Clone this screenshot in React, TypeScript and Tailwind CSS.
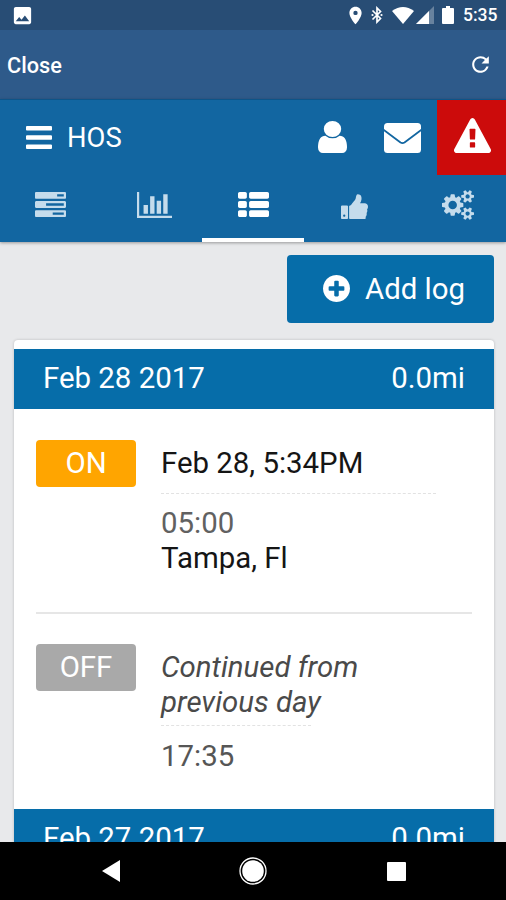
import type { ReactNode } from "react";
import { MdLocationOn, MdPhoto, MdRefresh } from "react-icons/md";
import clsx from "clsx";

const ICONS = {
  bars: "M1664 1344v128q0 26-19 45t-45 19h-1408q-26 0-45-19t-19-45v-128q0-26 19-45t45-19h1408q26 0 45 19t19 45zm0-512v128q0 26-19 45t-45 19h-1408q-26 0-45-19t-19-45v-128q0-26 19-45t45-19h1408q26 0 45 19t19 45zm0-512v128q0 26-19 45t-45 19h-1408q-26 0-45-19t-19-45v-128q0-26 19-45t45-19h1408q26 0 45 19t19 45z",
  user: "M1536 1399q0 109-62.5 187t-150.5 78h-854q-88 0-150.5-78t-62.5-187q0-85 8.5-160.5t31.5-152 58.5-131 94-89 134.5-34.5q131 128 313 128t313-128q76 0 134.5 34.5t94 89 58.5 131 31.5 152 8.5 160.5zm-256-887q0 159-112.5 271.5t-271.5 112.5-271.5-112.5-112.5-271.5 112.5-271.5 271.5-112.5 271.5 112.5 112.5 271.5z",
  warning:
    "M1024 1375v-190q0-14-9.5-23.5t-22.5-9.5h-192q-13 0-22.5 9.5t-9.5 23.5v190q0 14 9.5 23.5t22.5 9.5h192q13 0 22.5-9.5t9.5-23.5zm-2-374l18-459q0-12-10-19-13-11-24-11h-220q-11 0-24 11-10 7-10 21l17 457q0 10 10 16.5t24 6.5h185q14 0 23.5-6.5t10.5-16.5zm-14-934l768 1408q35 63-2 126-17 29-46.5 46t-63.5 17h-1536q-34 0-63.5-17t-46.5-46q-37-63-2-126l768-1408q17-31 47-49t65-18 65 18 47 49z",
  tasks:
    "M1024 1408h640v-128h-640v128zm-384-512h1024v-128h-1024v128zm640-512h384v-128h-384v128zm512 832v256q0 26-19 45t-45 19h-1664q-26 0-45-19t-19-45v-256q0-26 19-45t45-19h1664q26 0 45 19t19 45zm0-512v256q0 26-19 45t-45 19h-1664q-26 0-45-19t-19-45v-256q0-26 19-45t45-19h1664q26 0 45 19t19 45zm0-512v256q0 26-19 45t-45 19h-1664q-26 0-45-19t-19-45v-256q0-26 19-45t45-19h1664q26 0 45 19t19 45z",
  chart:
    "M640 896v512h-256v-512h256zm384-512v1024h-256v-1024h256zm1024 1152v128h-2048v-1536h128v1408h1920zm-640-896v768h-256v-768h256zm384-384v1152h-256v-1152h256z",
  list: "M512 1248v192q0 40-28 68t-68 28h-320q-40 0-68-28t-28-68v-192q0-40 28-68t68-28h320q40 0 68 28t28 68zm0-512v192q0 40-28 68t-68 28h-320q-40 0-68-28t-28-68v-192q0-40 28-68t68-28h320q40 0 68 28t28 68zm1280 512v192q0 40-28 68t-68 28h-960q-40 0-68-28t-28-68v-192q0-40 28-68t68-28h960q40 0 68 28t28 68zm-1280-1024v192q0 40-28 68t-68 28h-320q-40 0-68-28t-28-68v-192q0-40 28-68t68-28h320q40 0 68 28t28 68zm1280 512v192q0 40-28 68t-68 28h-960q-40 0-68-28t-28-68v-192q0-40 28-68t68-28h960q40 0 68 28t28 68zm0-512v192q0 40-28 68t-68 28h-960q-40 0-68-28t-28-68v-192q0-40 28-68t68-28h960q40 0 68 28t28 68z",
  thumb:
    "M320 1344q0-26-19-45t-45-19q-27 0-45.5 19t-18.5 45q0 27 18.5 45.5t45.5 18.5q26 0 45-18.5t19-45.5zm160-512v640q0 26-19 45t-45 19h-288q-26 0-45-19t-19-45v-640q0-26 19-45t45-19h288q26 0 45 19t19 45zm1184 0q0 86-55 149 15 44 15 76 3 76-43 137 17 56 0 117-15 57-54 94 9 112-49 181-64 76-197 78h-129q-66 0-144-15.5t-121.5-29-120.5-39.5q-123-43-158-44-26-1-45-19.5t-19-44.5v-641q0-25 18-43.5t43-20.5q24-2 76-59t101-121q68-87 101-120 18-18 31-48t17.5-48.5 13.5-60.5q7-39 12.5-61t19.5-52 34-50q19-19 45-19 46 0 82.5 10.5t60 26 40 40.500 24 45 12 50 5 45 .5 39q0 38-9.500 76t-19 60-27.500 56q-3 6-10 18t-11 22-8 24h277q78 0 135 57t57 135z",
  cogs: "M896 896q0-106-75-181t-181-75-181 75-75 181 75 181 181 75 181-75 75-181zm768 512q0-52-38-90t-90-38-90 38-38 90q0 53 37.5 90.5t90.5 37.5 90.5-37.5 37.5-90.5zm0-1024q0-52-38-90t-90-38-90 38-38 90q0 53 37.5 90.5t90.5 37.5 90.5-37.5 37.5-90.5zm-384 421v185q0 10-7 19.5t-16 10.5l-155 24q-11 35-32 76 34 48 90 115 7 11 7 20 0 12-7 19-23 30-82.5 89.5t-78.5 59.5q-11 0-21-7l-115-90q-37 19-77 31-11 108-23 155-7 24-30 24h-186q-11 0-20-7.5t-10-17.5l-23-153q-34-10-75-31l-118 89q-7 7-20 7-11 0-21-8-144-133-144-160 0-9 7-19 10-14 41-53t47-61q-23-44-35-82l-152-24q-10-1-17-9.5t-7-19.5v-185q0-10 7-19.5t16-10.5l155-24q11-35 32-76-34-48-90-115-7-11-7-20 0-12 7-20 22-30 82-89t79-59q11 0 21 7l115 90q34-18 77-32 11-108 23-154 7-24 30-24h186q11 0 20 7.5t10 17.5l23 153q34 10 75 31l118-89q8-7 20-7 11 0 21 8 144 133 144 160 0 8-7 19-12 16-42 54t-45 60q23 48 34 82l152 23q10 2 17 10.5t7 19.5zm640 533v140q0 16-149 31-12 27-30 52 51 113 51 138 0 4-4 7-122 71-124 71-8 0-46-47t-52-68q-20 2-30 2t-30-2q-14 21-52 68t-46 47q-2 0-124-71-4-3-4-7 0-25 51-138-18-25-30-52-149-15-149-31v-140q0-16 149-31 13-29 30-52-51-113-51-138 0-4 4-7 4-2 35-20t59-34 30-16q8 0 46 46.5t52 67.5q20-2 30-2t30 2q51-71 92-112l6-2q4 0 124 70 4 3 4 7 0 25-51 138 17 23 30 52 149 15 149 31zm0-1024v140q0 16-149 31-12 27-30 52 51 113 51 138 0 4-4 7-122 71-124 71-8 0-46-47t-52-68q-20 2-30 2t-30-2q-14 21-52 68t-46 47q-2 0-124-71-4-3-4-7 0-25 51-138-18-25-30-52-149-15-149-31v-140q0-16 149-31 13-29 30-52-51-113-51-138 0-4 4-7 4-2 35-20t59-34 30-16q8 0 46 46.5t52 67.5q20-2 30-2t30 2q51-71 92-112l6-2q4 0 124 70 4 3 4 7 0 25-51 138 17 23 30 52 149 15 149 31z",
  plus: "M1344 960v-128q0-26-19-45t-45-19h-256v-256q0-26-19-45t-45-19h-128q-26 0-45 19t-19 45v256h-256q-26 0-45 19t-19 45v128q0 26 19 45t45 19h256v256q0 26 19 45t45 19h128q26 0 45-19t19-45v-256h256q26 0 45-19t19-45zm320-64q0 209-103 385.5t-279.5 279.5-385.5 103-385.5-103-279.5-279.5-103-385.5 103-385.5 279.5-279.5 385.5-103 385.5 103 279.5 279.5 103 385.5z",
};

type IconName = keyof typeof ICONS;

function Icon({ name, box, className }: { name: IconName; box: string; className: string }) {
  return (
    <svg viewBox={box} preserveAspectRatio="none" className={clsx("fill-current flex-shrink-0", className)}>
      <path d={ICONS[name]} />
    </svg>
  );
}

const TABS: { name: IconName; box: string; size: string }[] = [
  { name: "tasks", box: "0 128 1792 1408", size: "w-[31px] h-[25px]" },
  { name: "chart", box: "0 128 2048 1536", size: "w-[35px] h-[26px] ml-[5px] mt-[1px]" },
  { name: "list", box: "0 128 1792 1408", size: "w-[31px] h-[25px] ml-[1px]" },
  { name: "thumb", box: "64 0 1600 1536", size: "w-[27px] h-[27px] ml-[1px] mt-[1px]" },
  { name: "cogs", box: "0 0 1920 1792", size: "w-[32px] h-[30px] ml-[6px] mt-[1px]" },
];

function StatusBar() {
  return (
    <div className="h-[30px] flex-shrink-0 bg-[#284d75] flex items-center text-white">
      <MdPhoto className="w-[23px] h-[23px] ml-[11px]" />
      <div className="flex-1" />
      <MdLocationOn className="w-[21px] h-[21px]" />
      <svg viewBox="0 0 12 18" className="w-[12px] h-[18px] ml-[5px]">
        <path d="M1.500 4.500 9.500 12.500 6 16V2l3.500 3.500-8 8" fill="none" stroke="#fff" strokeWidth="1.700" />
        <circle cx="1.500" cy="9" r="1.100" fill="#fff" />
        <circle cx="10.500" cy="9" r="1.100" fill="#fff" />
      </svg>
      <svg viewBox="0 0 22 17" className="w-[22px] h-[17px] ml-[9px] fill-current">
        <path d="M11 17 0 4Q11-4 22 4z" />
      </svg>
      <svg viewBox="0 0 18 18" className="w-[18px] h-[18px] ml-[2px] fill-current">
        <path d="M0 18 18 0v18z" opacity=".3" />
        <path d="M0 18 13 5v13z" />
      </svg>
      <svg viewBox="0 0 12 18" className="w-[12px] h-[18px] ml-[8px] fill-current">
        <path d="M1 2h3V0h4v2h3q1 0 1 1v14q0 1-1 1H1q-1 0-1-1V3q0-1 1-1z" />
      </svg>
      <span className="w-[35px] ml-[9px] mr-[8px] pt-[2px] text-[17.5px] leading-none font-medium">5:35</span>
    </div>
  );
}

function AppHeader() {
  return (
    <header className="relative z-10 h-[143px] flex-shrink-0 bg-[#1266a1] text-white flex flex-col shadow-[0_1px_3px_rgba(0,0,0,0.35)]">
      <div className="h-[76px] flex items-center border-t border-[#0d5488]">
        <Icon name="bars" box="128 256 1536 1280" className="w-[26px] h-[23px] ml-[26px] mb-[1px]" />
        <span className="flex-1 ml-[15px] pt-[2px] text-[27.4px] leading-none">HOS</span>
        <Icon name="user" box="256 128 1280 1536" className="w-[29px] h-[32px] mb-[1px]" />
        <svg viewBox="0 0 37 30" className="w-[37px] h-[30px] ml-[37px] mr-[16px] mt-[1px]">
          <rect width="37" height="30" rx="3.5" className="fill-white" />
          <path d="M-1 6.500 16.500 19.500Q18.500 20.800 20.500 19.500L38 6.500" fill="none" stroke="#1266a1" strokeWidth="1.800" />
        </svg>
        <div className="w-[69px] h-full bg-[#cc0b0b] flex items-center justify-center">
          <Icon name="warning" box="0 0 1792 1664" className="w-[37px] h-[35px] mb-[4px] ml-[1px]" />
        </div>
      </div>
      <nav className="flex-1 flex">
        {TABS.map((tab) => {
          const active = tab.name === "list";
          return (
            <div
              key={tab.name}
              className={clsx(
                "flex-1 flex items-center justify-center border-b-4 pb-[4px]",
                active ? "border-white" : "border-transparent text-[#c5dcec]"
              )}
            >
              <Icon name={tab.name} box={tab.box} className={tab.size} />
            </div>
          );
        })}
      </nav>
    </header>
  );
}

function DayHeader({ date, miles }: { date: string; miles: string }) {
  return (
    <div className="h-[60px] px-[29px] pb-[1px] bg-[#066da9] text-white flex items-center justify-between">
      <span>{date}</span>
      <span>{miles}</span>
    </div>
  );
}

function LogEntry({ status, children }: { status: "ON" | "OFF"; children: ReactNode }) {
  return (
    <div className="flex items-start gap-[25px]">
      <span
        className={clsx(
          "w-[100px] h-[47px] rounded-[4px] text-white flex items-center justify-center flex-shrink-0",
          status === "ON" ? "bg-[#ffa500]" : "bg-[#a9a9a9]"
        )}
      >
        {status}
      </span>
      <div className="pt-[6px]">{children}</div>
    </div>
  );
}

function NavBar() {
  return (
    <div className="h-[58px] flex-shrink-0 bg-black flex items-center pl-[102px]">
      <svg viewBox="0 0 18 22" className="w-[18px] h-[22px] fill-white">
        <path d="M18 0v22L0 11z" />
      </svg>
      <svg viewBox="0 0 28 28" className="w-[28px] h-[28px] ml-[119px]">
        <circle cx="14" cy="14" r="13" fill="none" stroke="#fff" strokeWidth="1.300" />
        <circle cx="14" cy="14" r="10.800" fill="#fff" />
      </svg>
      <div className="w-[19px] h-[19px] ml-[120px] rounded-[1px] bg-white" />
    </div>
  );
}

export default function App() {
  return (
    <div className="w-full h-[900px] overflow-hidden flex flex-col bg-[#e8e9eb] font-['Roboto',sans-serif]">
      <StatusBar />
      <div className="h-[69px] flex-shrink-0 bg-[#2e5a8a] text-white flex items-center justify-between pl-[7px] pr-[13px]">
        <span className="pt-[2px] text-[21.7px] leading-none font-medium">Close</span>
        <MdRefresh className="w-[25px] h-[25px]" />
      </div>
      <AppHeader />

      <main className="flex-1 min-h-0 overflow-hidden px-[14px] pr-[12px] pt-[13px] text-[29.4px] leading-[35px]">
        <div className="flex justify-end">
          <button className="w-[207px] h-[68px] rounded-[4px] bg-[#066da9] text-white flex items-center pl-[36px]">
            <Icon name="plus" box="128 128 1536 1536" className="w-[27px] h-[27px] mr-[15px] mb-[1px]" />
            Add log
          </button>
        </div>

        <section className="mt-[17px] pt-[9px] bg-white rounded-t-[4px] shadow-[0_0_3px_rgba(0,0,0,0.2)]">
          <DayHeader date="Feb 28 2017" miles="0.0mi" />
          <div className="h-[400px] px-[22px] pt-[31px]">
            <LogEntry status="ON">
              <p className="text-[#151515]">Feb 28, 5:34PM</p>
              <div className="w-[275px] mt-[12px] mb-[12px] border-t border-dashed border-[#e2e2e2]" />
              <p className="text-[#616161]">05:00</p>
              <p className="text-[#151515]">Tampa, Fl</p>
            </LogEntry>
            <div className="mt-[36px] mb-[30px] border-t-2 border-[#e6e6e6]" />
            <LogEntry status="OFF">
              <p className="w-[220px] italic text-[#4a4a4a]">Continued from previous day</p>
              <div className="w-[150px] mt-[5px] mb-[13px] border-t border-dashed border-[#e2e2e2]" />
              <p className="text-[#565656]">17:35</p>
            </LogEntry>
          </div>
          <DayHeader date="Feb 27 2017" miles="0.0mi" />
        </section>
      </main>

      <NavBar />
    </div>
  );
}
